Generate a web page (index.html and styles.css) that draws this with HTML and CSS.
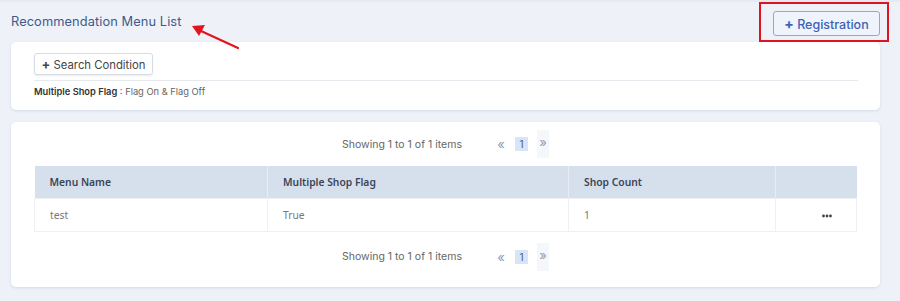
FILE: index.html
```html
<!DOCTYPE html>
<html lang="en">
<head>
  <meta charset="UTF-8" />
  <title>Recommendation Menu List</title>
  <link rel="stylesheet" href="styles.css">
</head>
<body>
  <div class="page-head">
    <h1 class="page-title">Recommendation Menu List</h1>
    <!-- annotation arrow -->
    <svg class="note-arrow" width="52" height="28" viewBox="0 0 52 28">
      <line x1="48" y1="25" x2="11" y2="8" stroke="#e3151c" stroke-width="2.2" stroke-linecap="round" />
      <polygon points="2,3 15,2 9,13" fill="#e3151c" />
    </svg>
    <div class="highlight">
      <button class="btn-reg"><span class="plus">+</span> Registration</button>
    </div>
  </div>

  <div class="card search-card">
    <button class="btn-search"><span class="plus">+</span> Search Condition</button>
    <div class="divider"></div>
    <div class="cond"><b>Multiple Shop Flag</b> : Flag On &amp; Flag Off</div>
  </div>

  <div class="card list-card">
    <div class="pager-row">
      <span class="showing">Showing 1 to 1 of 1 items</span>
      <div class="pager">
        <span class="pg-arrow">&laquo;</span>
        <span class="pg-num">1</span>
        <span class="pg-arrow pg-next">&raquo;</span>
      </div>
    </div>

    <table class="grid">
      <thead>
        <tr>
          <th class="c-name">Menu Name</th>
          <th class="c-flag">Multiple Shop Flag</th>
          <th class="c-count">Shop Count</th>
          <th class="c-act"></th>
        </tr>
      </thead>
      <tbody>
        <tr>
          <td>test</td>
          <td>True</td>
          <td>1</td>
          <td class="act">
            <svg width="10" height="4" viewBox="0 0 10 4">
              <circle cx="1.5" cy="2" r="1.4" fill="#444" />
              <circle cx="5" cy="2" r="1.4" fill="#444" />
              <circle cx="8.5" cy="2" r="1.4" fill="#444" />
            </svg>
          </td>
        </tr>
      </tbody>
    </table>

    <div class="pager-row bottom">
      <span class="showing">Showing 1 to 1 of 1 items</span>
      <div class="pager">
        <span class="pg-arrow">&laquo;</span>
        <span class="pg-num">1</span>
        <span class="pg-arrow pg-next">&raquo;</span>
      </div>
    </div>
  </div>
</body>
</html>
```

FILE: styles.css
```css
body {
  margin: 0;
  padding: 0 20px 0 11px;
  font-family: 'Inter', 'Noto Sans', sans-serif;
  background: #eef2f8;
  color: #333;
  height: 301px;
  overflow: hidden;
  border-top: 2px solid #e4e9f2;
  box-sizing: border-box;
}

.page-head {
  position: relative;
  display: flex;
  align-items: center;
  justify-content: space-between;
  height: 40px;
  margin-right: -9px;
}

.page-title {
  margin: 0;
  font-size: 12.8px;
  font-weight: 400;
  color: #3e5a8a;
  letter-spacing: 0.1px;
  padding-bottom: 2px;
}

.note-arrow {
  position: absolute;
  left: 179px;
  top: 21px;
}

.highlight {
  border: 2px solid #e0141e;
  padding: 7px 7px 4px 12px;
  align-self: flex-start;
}

.btn-reg {
  display: block;
  width: 107px;
  height: 25px;
  border: 1px solid #8ea8db;
  border-radius: 3px;
  background: #eef3fc;
  color: #3d63b5;
  font-family: inherit;
  font-size: 12.5px;
  font-weight: 500;
  padding: 0;
}

.btn-reg .plus {
  font-weight: 700;
  font-size: 14px;
}

.card {
  background: #fff;
  border-radius: 5px;
  box-shadow: 0 1px 3px rgba(60, 80, 120, 0.15);
}

.search-card {
  height: 68px;
  padding: 11px 22px 0 23px;
  box-sizing: border-box;
}

.btn-search {
  height: 22px;
  width: 119px;
  padding: 0;
  border: 1px solid #d8dce2;
  border-radius: 3px;
  background: #fff;
  box-shadow: 0 1px 2px rgba(0, 0, 0, 0.08);
  font-family: inherit;
  font-size: 11.3px;
  color: #444;
}

.btn-search .plus {
  font-weight: 700;
  font-size: 13px;
}

.divider {
  height: 1px;
  background: #e6e9ee;
  margin-top: 5px;
}

.cond {
  margin-top: 5px;
  font-size: 9.3px;
  color: #666;
}

.cond b {
  color: #333;
  font-weight: 600;
}

.list-card {
  margin-top: 12px;
  height: 165px;
  padding: 0 23px 0 23px;
  box-sizing: border-box;
}

.pager-row {
  display: flex;
  justify-content: center;
  align-items: center;
  height: 44px;
}

.pager-row.bottom {
  height: 50px;
}

.showing {
  font-size: 10.5px;
  color: #666;
  margin-right: 34px;
}

.pager {
  display: flex;
  align-items: center;
  gap: 9px;
}

.pg-arrow {
  color: #8a9bbd;
  font-size: 13px;
  width: 10px;
  text-align: center;
}

.pg-next {
  background: #f5f7fb;
  padding: 4px 1px 8px;
}

.pg-num {
  display: inline-block;
  width: 13px;
  height: 14px;
  line-height: 14px;
  background: #d9e5f6;
  color: #3f5d8f;
  font-size: 10px;
  text-align: center;
}

.grid {
  width: 100%;
  table-layout: fixed;
  border-collapse: collapse;
  font-family: 'Noto Sans', 'Open Sans', sans-serif;
  font-size: 10.3px;
}

.grid th {
  box-sizing: border-box;
  background: #d6e0ec;
  color: #3b4556;
  font-weight: 600;
  text-align: left;
  height: 32px;
  padding: 0 15px;
  border-right: 1px solid #e8edf3;
}

.grid th:last-child {
  border-right: none;
}

.c-name { width: 233px; }
.c-flag { width: 301px; }
.c-count { width: 207px; }

.grid td {
  height: 32px;
  padding: 0 15px;
  color: #777;
  border: 1px solid #eef0f3;
}

.grid td.act {
  text-align: right;
  padding-right: 24px;
}

.act svg {
  display: inline-block;
  vertical-align: middle;
}
```
